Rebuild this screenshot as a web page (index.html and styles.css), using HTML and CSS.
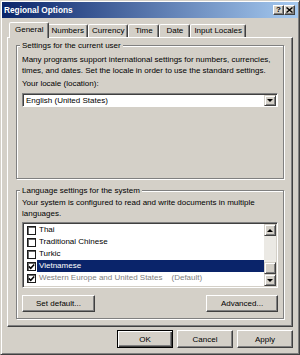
FILE: index.html
```html
<!DOCTYPE html>
<html lang="en">
<head>
    <meta charset="UTF-8">
    <title>Regional Options</title>
    <link rel="stylesheet" href="styles.css">
</head>
<body>
    <div class="window">
        <div class="titlebar">
            <span class="title">Regional Options</span>
            <div class="caption-buttons">
                <div class="cap-btn help">?</div>
                <div class="cap-btn close">
                    <svg width="7" height="6" viewBox="0 0 7 6"><path d="M0.5 0.5 L6.5 5.5 M6.5 0.5 L0.5 5.5" stroke="#000" stroke-width="1.4"/></svg>
                </div>
            </div>
        </div>

        <div class="tabs">
            <div class="tab selected">General</div>
            <div class="tab">Numbers</div>
            <div class="tab">Currency</div>
            <div class="tab">Time</div>
            <div class="tab">Date</div>
            <div class="tab">Input Locales</div>
        </div>

        <div class="panel">
            <div class="group group-user">
                <div class="group-title">Settings for the current user</div>
                <p class="desc">Many programs support international settings for numbers, currencies,<br>times, and dates. Set the locale in order to use the standard settings.</p>
                <div class="label">Your locale (location):</div>
                <div class="select">
                    <span class="select-value">English (United States)</span>
                    <span class="drop-btn"><span class="arrow-down"></span></span>
                </div>
            </div>

            <div class="group group-system">
                <div class="group-title">Language settings for the system</div>
                <p class="desc desc-system">Your system is configured to read and write documents in multiple<br>languages.</p>
                <div class="listbox">
                    <div class="items">
                        <div class="item"><span class="check"></span><span class="item-text">Thai</span></div>
                        <div class="item"><span class="check"></span><span class="item-text">Traditional Chinese</span></div>
                        <div class="item"><span class="check"></span><span class="item-text">Turkic</span></div>
                        <div class="item selected">
                            <span class="check"><svg width="7" height="7" viewBox="0 0 7 7"><path d="M0.8 3.4 L2.7 5.3 L6.2 1.4" fill="none" stroke="#000" stroke-width="1.5"/></svg></span>
                            <span class="item-text">Vietnamese</span>
                        </div>
                        <div class="item disabled">
                            <span class="check"><svg width="7" height="7" viewBox="0 0 7 7"><path d="M0.8 3.4 L2.7 5.3 L6.2 1.4" fill="none" stroke="#000" stroke-width="1.5"/></svg></span>
                            <span class="item-text">Western Europe and United States<span class="default-tag">(Default)</span></span>
                        </div>
                    </div>
                    <div class="scrollbar">
                        <div class="sb-btn"><span class="arrow-up"></span></div>
                        <div class="sb-track"></div>
                        <div class="sb-thumb"></div>
                        <div class="sb-btn"><span class="arrow-down"></span></div>
                    </div>
                </div>
                <div class="group-buttons">
                    <button class="btn btn-setdefault">Set default...</button>
                    <button class="btn btn-advanced">Advanced...</button>
                </div>
            </div>
        </div>

        <div class="footer">
            <button class="btn btn-dialog default">OK</button>
            <button class="btn btn-dialog">Cancel</button>
            <button class="btn btn-dialog">Apply</button>
        </div>
    </div>
</body>
</html>
```

FILE: styles.css
```css
* {
    box-sizing: border-box;
}
body {
    margin: 0;
    font-family: "Liberation Sans", Arial, sans-serif;
    font-size: 8px;
    color: #000;
    background: #d4d0c8;
}
.window {
    width: 300px;
    height: 355px;
    padding: 1px;
    background: #d4d0c8;
    border: 1px solid;
    border-color: #d4d0c8 #404040 #404040 #d4d0c8;
    box-shadow: inset 1px 1px #fff, inset -1px -1px #808080;
    display: flex;
    flex-direction: column;
}

/* title bar */
.titlebar {
    height: 16px;
    padding: 0 3px 0 2px;
    background: linear-gradient(to right, #0a246a, #a6caf0);
    display: flex;
    align-items: center;
    justify-content: space-between;
}
.title {
    color: #fff;
    font-weight: bold;
    font-size: 8.3px;
}
.caption-buttons {
    display: flex;
}
.cap-btn {
    width: 11px;
    height: 10px;
    background: #d4d0c8;
    border: 1px solid;
    border-color: #fff #404040 #404040 #fff;
    box-shadow: inset -1px -1px #808080;
    display: flex;
    align-items: center;
    justify-content: center;
    font-weight: bold;
    font-size: 8px;
    line-height: 8px;
}

/* tabs */
.tabs {
    margin-top: 4px;
    margin-bottom: -1px;
    padding-left: 9px;
    height: 16px;
    display: flex;
    align-items: flex-end;
    position: relative;
    z-index: 1;
}
.tab {
    height: 13px;
    min-width: 31px;
    margin-bottom: 1px;
    padding: 0 3px;
    line-height: 11px;
    text-align: center;
    background: #d4d0c8;
    border: 1px solid;
    border-bottom: none;
    border-color: #fff #404040 transparent #fff;
    border-radius: 2px 2px 0 0;
    box-shadow: inset -1px 0 #808080;
}
.tab.selected {
    height: 16px;
    margin: 0 -2px;
    padding: 0 5px;
    line-height: 13px;
    position: relative;
    z-index: 2;
}

/* tab page */
.panel {
    width: 286px;
    height: 290px;
    margin-left: 5px;
    padding: 7px 8px 0;
    border: 1px solid;
    border-color: #fff #404040 #404040 #fff;
    box-shadow: inset -1px -1px #808080;
}
.group {
    padding: 0 5px;
    border: 1px solid #808080;
    box-shadow: inset 1px 1px #fff, 1px 1px #fff;
    line-height: 11px;
}
.group-user {
    height: 134px;
}
.group-system {
    height: 129px;
    margin-top: 11px;
}
.group-title {
    display: table;
    margin: -6px 0 0 -2px;
    padding: 0 2px;
    background: #d4d0c8;
}
.desc {
    margin: 3px 0 0;
}
.desc-system {
    margin-top: 1px;
}
.label {
    margin-top: 2px;
}

.select {
    height: 14px;
    margin-top: 4px;
    background: #fff;
    border: 1px solid;
    border-color: #808080 #fff #fff #808080;
    box-shadow: inset 1px 1px #404040;
    display: flex;
    align-items: center;
    padding: 1px 1px 0 3px;
}
.select-value {
    flex: 1;
}
.drop-btn {
    width: 12px;
    height: 11px;
    background: #d4d0c8;
    border: 1px solid;
    border-color: #d4d0c8 #404040 #404040 #d4d0c8;
    box-shadow: inset 1px 1px #fff, inset -1px -1px #808080;
    display: flex;
    align-items: center;
    justify-content: center;
}
.arrow-down {
    width: 0;
    height: 0;
    border-left: 3px solid transparent;
    border-right: 3px solid transparent;
    border-top: 3px solid #000;
}
.arrow-up {
    width: 0;
    height: 0;
    border-left: 3px solid transparent;
    border-right: 3px solid transparent;
    border-bottom: 3px solid #000;
}

/* list of languages */
.listbox {
    height: 66px;
    margin-top: 3px;
    background: #fff;
    border: 1px solid;
    border-color: #808080 #fff #fff #808080;
    box-shadow: inset 1px 1px #404040, inset -1px -1px #d4d0c8;
    padding: 1px;
    display: flex;
}
.items {
    flex: 1;
}
.item {
    height: 12px;
    padding-left: 3px;
    display: flex;
    align-items: center;
    line-height: 12px;
}
.check {
    width: 9px;
    height: 9px;
    background: #fff;
    border: 1px solid #1a1a1a;
    box-shadow: inset 1px 1px #6a6a6a;
    display: flex;
    align-items: center;
    justify-content: center;
}
.item-text {
    flex: 1;
    margin-left: 1px;
    padding-left: 2px;
}
.item.selected .item-text {
    background: #0a246a;
    color: #fff;
}
.item.disabled .item-text {
    color: #808080;
}
.default-tag {
    margin-left: 9px;
}

.scrollbar {
    width: 12px;
    display: flex;
    flex-direction: column;
    background: #ebe9e4;
}
.sb-btn, .sb-thumb {
    height: 12px;
    background: #d4d0c8;
    border: 1px solid;
    border-color: #d4d0c8 #404040 #404040 #d4d0c8;
    box-shadow: inset 1px 1px #fff, inset -1px -1px #808080;
    display: flex;
    align-items: center;
    justify-content: center;
}
.sb-track {
    flex: 1;
}

/* buttons */
.btn {
    height: 17px;
    padding: 0;
    font-family: "Liberation Sans", Arial, sans-serif;
    font-size: 8px;
    color: #000;
    background: #d4d0c8;
    border: 1px solid;
    border-color: #fff #404040 #404040 #fff;
    box-shadow: inset -1px -1px #808080;
}
.group-buttons {
    margin-top: 7px;
    display: flex;
    justify-content: space-between;
}
.btn-setdefault {
    width: 73px;
}
.btn-advanced {
    width: 72px;
}
.footer {
    padding: 3px 5px 0 0;
    display: flex;
    justify-content: flex-end;
    gap: 4px;
}
.btn-dialog {
    width: 56px;
    height: 18px;
}
.btn-dialog.default {
    border-color: #000;
    box-shadow: inset 1px 1px #fff, inset -1px -1px #404040, inset -2px -2px #808080;
}
```
